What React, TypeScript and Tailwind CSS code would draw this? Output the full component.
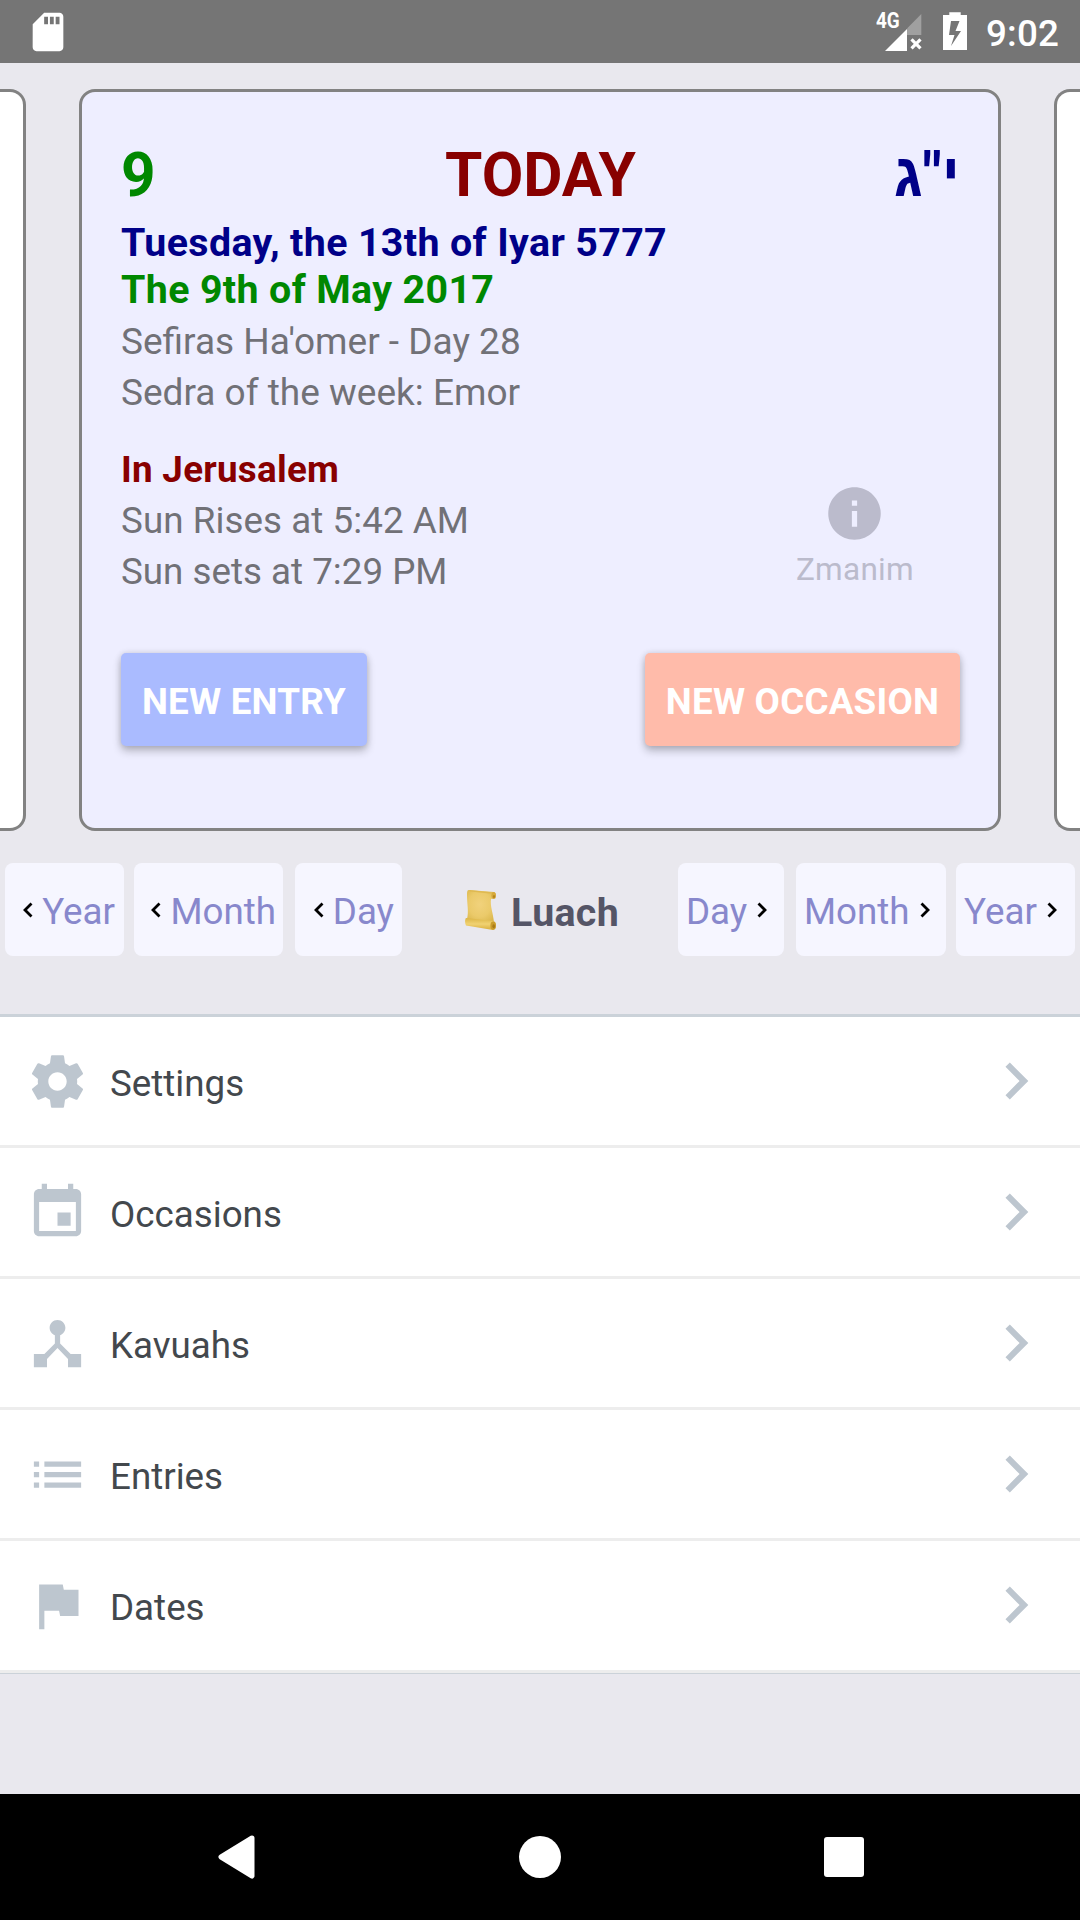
import React from 'react';

const rows = [
  {
    label: 'Settings',
    d: 'M19.43 12.98c.04-.32.07-.64.07-.98s-.03-.66-.07-.98l2.11-1.65c.19-.15.24-.42.12-.64l-2-3.46c-.12-.22-.39-.3-.61-.22l-2.49 1c-.52-.4-1.08-.73-1.69-.98l-.38-2.65C14.46 2.18 14.25 2 14 2h-4c-.25 0-.46.18-.49.42l-.38 2.65c-.61.25-1.17.59-1.69.98l-2.49-1c-.23-.09-.49 0-.61.22l-2 3.46c-.13.22-.07.49.12.64l2.11 1.65c-.04.32-.07.65-.07.98s.03.66.07.98l-2.11 1.65c-.19.15-.24.42-.12.64l2 3.46c.12.22.39.3.61.22l2.49-1c.52.4 1.08.73 1.69.98l.38 2.65c.03.24.24.42.49.42h4c.25 0 .46-.18.49-.42l.38-2.65c.61-.25 1.17-.59 1.69-.98l2.49 1c.23.09.49 0 .61-.22l2-3.46c.12-.22.07-.49-.12-.64l-2.11-1.65zM12 15.5c-1.93 0-3.5-1.57-3.5-3.5s1.57-3.5 3.5-3.5 3.5 1.57 3.5 3.5-1.57 3.5-3.5 3.5z',
  },
  {
    label: 'Occasions',
    d: 'M17 12h-5v5h5v-5zM16 1v2H8V1H6v2H5c-1.11 0-1.99.9-1.99 2L3 19c0 1.1.89 2 2 2h14c1.1 0 2-.9 2-2V5c0-1.1-.9-2-2-2h-1V1h-2zm3 18H5V8h14v11z',
  },
  {
    label: 'Kavuahs',
    d: 'M17 16l-4-4V8.82C14.16 8.4 15 7.3 15 6c0-1.66-1.34-3-3-3S9 4.34 9 6c0 1.3.84 2.4 2 2.82V12l-4 4H3v5h5v-3.05l4-4.2 4 4.2V21h5v-5h-4z',
  },
  {
    label: 'Entries',
    d: 'M3 13h2v-2H3v2zm0 4h2v-2H3v2zm0-8h2V7H3v2zm4 4h14v-2H7v2zm0 4h14v-2H7v2zM7 7v2h14V7H7z',
  },
  { label: 'Dates', d: 'M14.4 6L14 4H5v17h2v-7h5.6l.4 2h7V6z' },
];

function StatusBar() {
  return (
    <header className="flex h-[63px] items-center bg-[#757575] text-white">
      <svg className="ml-[25px] h-[46px] w-[46px]" viewBox="0 0 24 24" fill="currentColor">
        <path d="M18 2h-8L4.02 8 4 20c0 1.1.9 2 2 2h12c1.1 0 2-.9 2-2V4c0-1.1-.9-2-2-2zm-6 6h-2V4h2v4zm3 0h-2V4h2v4zm3 0h-2V4h2v4z" />
      </svg>
      <div className="relative ml-auto h-[63px] w-[48px]">
        <span className="absolute left-0 top-[8px] origin-left scale-x-[0.86] text-[22px] font-bold leading-[26px]">
          4G
        </span>
        <svg className="absolute inset-0 h-[63px] w-[48px]" viewBox="0 0 48 63">
          <path d="M45.3 14V35H31V28.5z" fill="#a0a0a0" />
          <path d="M9 51L31 29V51z" fill="#fff" />
          <path d="M35.500 39.300l9 9M44.500 39.300l-9 9" stroke="#fff" strokeWidth="3.2" />
        </svg>
      </div>
      <svg className="ml-[19px] h-[63px] w-[24px]" viewBox="0 0 24 63">
        <path d="M6.3 12.3H17.7V15H24V50H0V15H6.3zM8 21L6 35H11.500L8 46L18 31H12.500L16.500 21z" fill="#fff" fillRule="evenodd" />
      </svg>
      <span className="ml-[19px] mr-[20px] mt-[4px] w-[74px] whitespace-nowrap text-[36.75px] font-medium leading-[44px] tracking-[0.2px]">
        9:02
      </span>
    </header>
  );
}

function TodayCard() {
  return (
    <article className="flex w-[922px] flex-col rounded-[16px] border-[3px] border-[#828282] bg-[#eeeeff] pl-[39px] pr-[38px] pt-[48px]">
      <div className="grid h-[71px] grid-cols-3 text-[60.375px] font-bold leading-[71px]">
        <span className="text-[#008800]">9</span>
        <span className="text-center text-[#880000]">TODAY</span>
        <span className="text-right text-[#000088]">
          <bdo dir="rtl">י"ג</bdo>
        </span>
      </div>
      <div className="mt-[8px] text-[39.375px] font-bold leading-[47px] tracking-[0.36px]">
        <p className="text-[#000088]">Tuesday, the 13th of Iyar 5777</p>
        <p className="text-[#008800]">The 9th of May 2017</p>
      </div>
      <div className="mt-[3px] text-[37px] leading-[51px] text-[#717177]">
        <p>Sefiras Ha'omer - Day 28</p>
        <p>Sedra of the week: Emor</p>
      </div>
      <div className="mt-[26px] flex justify-between text-[36.75px] leading-[51px] tracking-[0.06px] text-[#717177]">
        <div>
          <p className="font-bold tracking-[0.28px] text-[#880000]">In Jerusalem</p>
          <p>Sun Rises at 5:42 AM</p>
          <p className="tracking-normal">Sun sets at 7:29 PM</p>
        </div>
        <div className="mr-[46px] mt-[38px] flex flex-col items-center text-[#bbbbcc]">
          <svg className="h-[63px] w-[63px]" viewBox="0 0 24 24" fill="currentColor">
            <path d="M12 2C6.48 2 2 6.48 2 12s4.480 10 10 10 10-4.480 10-10S17.520 2 12 2zm1 15h-2v-6h2v6zm0-8h-2V7h2v2z" />
          </svg>
          <span className="mt-[6px] text-[31.5px] leading-[38px] tracking-[0.3px]">Zmanim</span>
        </div>
      </div>
      <div className="mt-[56px] flex justify-between text-[36.75px] font-bold tracking-[0.22px] text-white">
        <button className="h-[93px] w-[246px] rounded-[5px] bg-[#aabbff] pt-[2px] leading-[93px] shadow-[0_5px_9px_rgba(0,0,0,0.24),0_0_6px_rgba(0,0,0,0.12)]">
          NEW ENTRY
        </button>
        <button className="h-[93px] w-[315px] rounded-[5px] bg-[#ffbbaa] pt-[2px] leading-[93px] shadow-[0_5px_9px_rgba(0,0,0,0.24),0_0_6px_rgba(0,0,0,0.12)]">
          NEW OCCASION
        </button>
      </div>
    </article>
  );
}

function Arrow({ flip }: { flip?: boolean }) {
  return (
    <svg className="h-[18px] w-[12px]" viewBox="0 0 12 18" fill="none" stroke="#000" strokeWidth="2.8">
      <path d={flip ? 'M2.500 2.500L9 9L2.500 15.500' : 'M9.500 2.500L3 9L9.500 15.500'} />
    </svg>
  );
}

const navButton = 'flex h-[93px] items-center rounded-[8px] bg-[#f6f6ff] text-[36.75px] leading-[51px] text-[#8888cc]';

function Back({ label, className }: { label: string; className: string }) {
  return (
    <button className={`${navButton} ${className} justify-end`}>
      <Arrow />
      <span className="ml-[8px] mt-[3px]">{label}</span>
    </button>
  );
}

function Forward({ label, className }: { label: string; className: string }) {
  return (
    <button className={`${navButton} ${className}`}>
      <span className="mr-[9px] mt-[3px]">{label}</span>
      <Arrow flip />
    </button>
  );
}

function Scroll() {
  return (
    <svg className="h-[42px] w-[32px]" viewBox="0 0 32 42">
      <defs>
        <radialGradient id="paper" cx="0.45" cy="0.45" r="0.65">
          <stop offset="0" stopColor="#f1d27c" />
          <stop offset="0.6" stopColor="#ebca6a" />
          <stop offset="1" stopColor="#dcb84e" />
        </radialGradient>
        <linearGradient id="roll" x1="0" y1="0" x2="0" y2="1">
          <stop offset="0" stopColor="#dcb545" />
          <stop offset="0.5" stopColor="#f1d272" />
          <stop offset="1" stopColor="#d9ae3c" />
        </linearGradient>
      </defs>
      <path d="M4 1L29 3C31 4 31 7 29 9L26 10C25 17 28 24 29 33L2 30C4 23 2 15 2 6C2 3 2 1 4 1z" fill="url(#paper)" />
      <path d="M4 1L29 3.500V5L5 2.500z" fill="#dfb951" />
      <ellipse cx="28.700" cy="6.500" rx="2.300" ry="3.500" fill="#d6a93a" />
      <ellipse cx="29" cy="7.500" rx="1.100" ry="1.600" fill="#b58420" />
      <path d="M1 29L28 32C32 33 32 39 28 41L1 36.500C-0.500 34 0 30 1 29z" fill="url(#roll)" />
      <ellipse cx="28.200" cy="36.700" rx="2.800" ry="4.100" fill="#c99c2c" />
      <ellipse cx="28.700" cy="37.200" rx="1.300" ry="2" fill="#a87a18" />
    </svg>
  );
}

export default function App() {
  return (
    <div className="flex h-[1920px] w-[1080px] flex-col overflow-hidden bg-[#e9e8ee] [font-family:Roboto,'Liberation_Sans',sans-serif]">
      <StatusBar />
      <section className="mt-[26px] flex h-[742px] justify-between">
        <div className="w-[26px] rounded-r-[16px] border-[3px] border-l-0 border-[#828282] bg-white" />
        <TodayCard />
        <div className="w-[26px] rounded-l-[16px] border-[3px] border-r-0 border-[#828282] bg-white" />
      </section>
      <nav className="mt-[32px] flex justify-between px-[5px]">
        <div className="flex">
          <Back label="Year" className="w-[119px] pr-[9px]" />
          <span className="w-[10px]" />
          <Back label="Month" className="w-[149px] pr-[7px]" />
          <span className="w-[12px]" />
          <Back label="Day" className="w-[107px] pr-[8px]" />
        </div>
        <div className="ml-[4px] flex items-center text-[39.375px] font-bold leading-[47px] tracking-[0.3px] text-[#555566]">
          <Scroll />
          <span className="ml-[14px] mt-[5px]">Luach</span>
        </div>
        <div className="flex">
          <Forward label="Day" className="w-[106px] pl-[8px]" />
          <span className="w-[12px]" />
          <Forward label="Month" className="w-[150px] pl-[8px]" />
          <span className="w-[10px]" />
          <Forward label="Year" className="w-[119px] pl-[8px]" />
        </div>
      </nav>
      <ul className="mt-[58px] border-b border-t-[3px] border-b-[#cbd2d9] border-t-[#cbd2d9] bg-white">
        {rows.map((row) => (
          <li key={row.label} className="flex h-[131px] items-center border-b-[3px] border-[#ededed] pl-[26px] pr-[27px] last:h-[132px] last:pb-px">
            <svg className="h-[63px] w-[63px]" viewBox="0 0 24 24" fill="#bdc6cf">
              <path d={row.d} />
            </svg>
            <span className="ml-[21px] mt-[4px] text-[36.75px] leading-[51px] text-[#43484d]">{row.label}</span>
            <svg className="ml-auto h-[74px] w-[74px]" viewBox="0 0 24 24" fill="#bdc6cf">
              <path d="M10 6L8.590 7.410 13.170 12l-4.580 4.590L10 18l6-6z" />
            </svg>
          </li>
        ))}
      </ul>
      <footer className="mt-auto flex h-[126px] items-center bg-black pl-[218px] pr-[216px]">
        <svg className="h-[44px] w-[38px]" viewBox="0 0 38 44">
          <path d="M34 3L3 22L34 41z" fill="#fff" stroke="#fff" strokeWidth="5" strokeLinejoin="round" />
        </svg>
        <span className="ml-[263px] h-[42px] w-[42px] rounded-full bg-white" />
        <span className="ml-auto h-[40px] w-[40px] rounded-[3px] bg-white" />
      </footer>
    </div>
  );
}
